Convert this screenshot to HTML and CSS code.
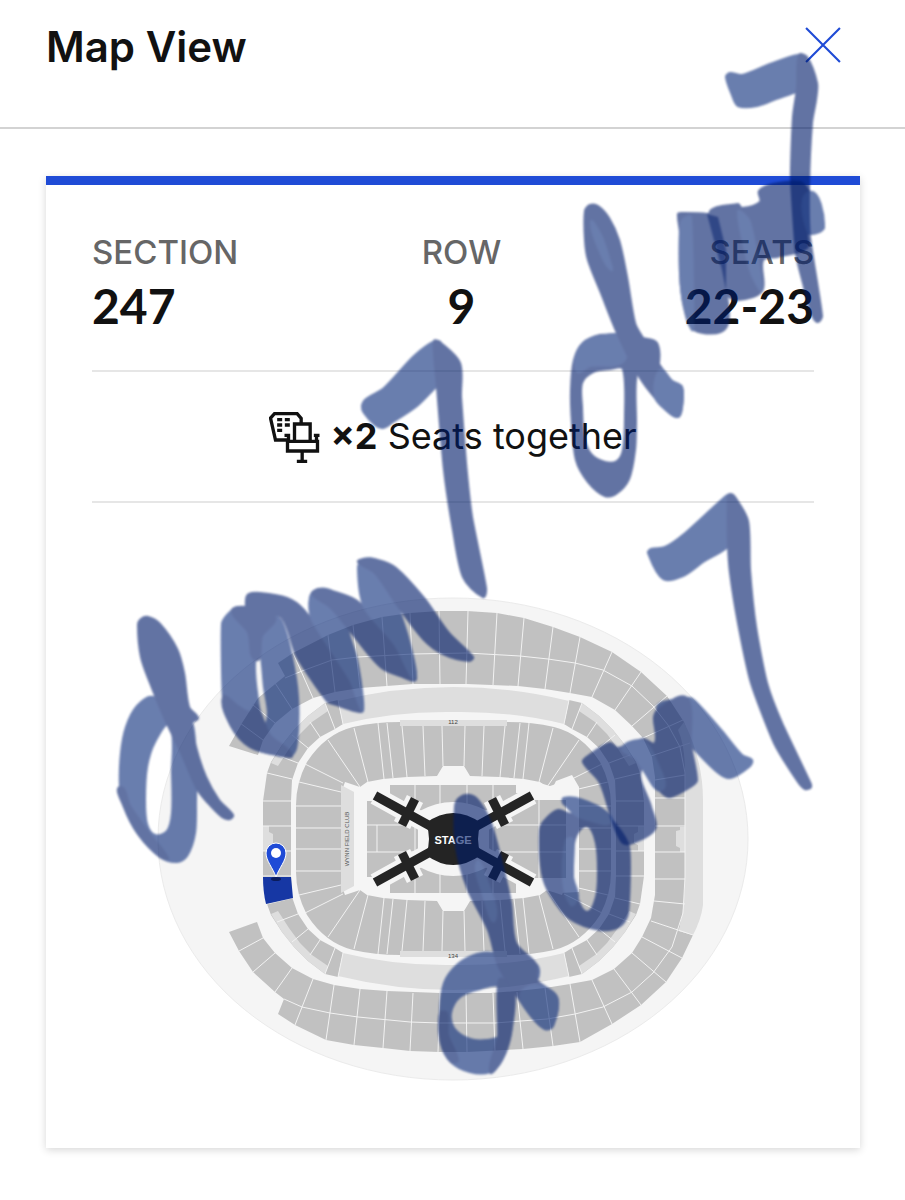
FILE: index.html
```html
<!DOCTYPE html>
<html lang="en">
<head>
<meta charset="utf-8">
<meta name="viewport" content="width=device-width, initial-scale=1">
<title>Map View</title>
<link rel="stylesheet" href="styles.css">
</head>
<body>
<div class="page">
  <header class="header">
    <h1 class="title">Map View</h1>
    <button class="close" type="button" aria-label="Close">
      <svg viewBox="0 0 34 34" aria-hidden="true"><path d="M1 1 33 33M33 1 1 33"/></svg>
    </button>
  </header>

  <main class="card">
    <dl class="stats">
      <div class="stat"><dt>SECTION</dt><dd>247</dd></div>
      <div class="stat stat-mid"><dt>ROW</dt><dd>9</dd></div>
      <div class="stat stat-end"><dt>SEATS</dt><dd>22-23</dd></div>
    </dl>

    <p class="together">
      <svg class="seat-icon" viewBox="60 240 152 156" aria-hidden="true">
        <path d="M116 327H79L64 261l12-13h68l12 14v12M136 330v-51h47v51M115 331h90v29h-90ZM106 313h17M118 313v18M194 313h17M202 313v18M159 360v30M143 391h31"/>
        <path class="dots" d="M84 261h15v10H84zM107 261h15v10h-15zM84 277h15v10H84zM107 277h15v10h-15zM84 293h15v10H84z"/>
      </svg>
      <span><strong>×2</strong> Seats together</span>
    </p>

    <svg class="map" viewBox="92 590 722 500" role="img" aria-label="Seating map">
      <defs>
        <g id="quarter">
          <path class="seats" d="M263 839V801L267 773 271 762 282 745 294 730 308 716 325 703 338 700 343 724 335 729 320 737 308 748 298 763 292 780 291 801V839Z"/>
          <path class="light" d="M271 763 282 745 294 730 308 716 325 703 328 711 312 722 300 734 289 749 278 766Z"/>
          <path class="light" d="M263 852V826H269V832L273 834V839H263Z"/>
          <path class="light" d="M338 701Q395 687 454 687V712Q395 711 343 724Z"/>
          <path class="seats" d="M296 839V805Q296 783 307 762 325 734 353 727 375 722 400 722H454V766H443L437 776 407 777 383 779 367 782 360 787 345 782 341 793V839Z"/>
          <path class="light" d="M400 720H454V726H400Z"/>
          <path class="line" d="M263 801H291M263 826H291M267 773 292 779M277 755 298 763M292 735 308 748M310 722 320 737M325 703 335 729M338 700 343 724M442 726 443 766M423 726 425 776M402 726 407 777M387 723 393 778M378 723 384 779M354 728 368 782M328 740 360 787M305 764 343 783M299 782 341 792M296 806H341M296 828H341"/>
        </g>
        <g id="half">
          <use href="#quarter"/>
          <use href="#quarter" transform="translate(0 1677) scale(1 -1)"/>
        </g>
        <g id="arm">
          <path d="M375 795.500 432 827"/>
          <path class="bar" d="M415 799 402 825"/>
        </g>
        <g id="arms">
          <use href="#arm"/>
          <use href="#arm" transform="translate(907 0) scale(-1 1)"/>
          <use href="#arm" transform="translate(0 1678) scale(1 -1)"/>
          <use href="#arm" transform="translate(907 1678) scale(-1 -1)"/>
        </g>
      </defs>

      <ellipse class="ground" cx="453" cy="839" rx="295" ry="241"/>

      <path class="seats" d="M229 746 242 723 258 698 285 676 278 663 293 653 328 635 353 625 382 617 410 613 439 611H467L497 613 524 618 553 627 580 637 612 652 641 672 667 696 684 722 691 743 686 775V877L683 913 679 931 693 935 682 958 666 982 641 1005 612 1024 580 1042 553 1046 523 1049 467 1052H439L410 1051 383 1048 354 1045 326 1040 295 1025 278 1014 284 999 275 992 253 972 239 951 229 932 257 922 263 938 275 953 292 968 313 979 334 985 360 989 387 991 440 993H490L517 991 545 988 570 984 592 980 614 969 632 953 642 937 651 918 655 895V777L652 757 643 738 632 726 615 710 592 697 570 693 545 689 518 686 467 684H413L360 688 335 692 313 698 292 709 275 723 263 740 258 755Z"/>
      <path class="light" d="M684 722Q703 760 703 800V905Q701 920 693 935L679 931Q685 905 685 877V773Q685 745 678 730Z"/>
      <path class="light" d="M686 827H680V830L676 831V846L680 848V852H686Z"/>
      <path class="line" d="M285 678 302 671 332 660 358 657 413 654 467 653 520 656 548 659 575 663 603 670 632 686 653 706 668 725 680 747 685 773V877L683 913 672 947 653 973 632 992 603 1007 575 1014 547 1019 495 1023H440L410 1022 358 1017 330 1013 302 1007 284 999"/>
      <path class="line" d="M240 723 263 740M253 705 275 723M275 683 292 709M293 653 313 698M328 635 335 692M353 625 360 688M382 617 387 686M410 613 413 684M439 611 440 684M468 611 466 684M497 613 493 685M524 618 518 686M553 627 545 689M580 637 570 693M612 652 592 697M641 672 615 710M667 696 632 726M683 720 643 738M690 743 651 756M685 775 655 780M655 798H685M655 826H685M655 852H685M655 879H685M685 904 654 901M651 921 693 935M642 937 682 958M632 953 666 982M614 969 641 1005M592 980 612 1024M570 984 580 1042M545 988 553 1046M517 992 523 1049M493 993 495 1051M466 993 467 1052M440 993 438 1052M413 993 410 1051M387 991 383 1048M360 989 354 1045M334 985 326 1040M313 979 295 1025M292 968 275 992M275 953 253 972M263 938 239 951"/>

      <use href="#half"/>
      <use href="#half" transform="translate(907 0) scale(-1 1)"/>

      <path class="light" d="M341 785 354 792V886L341 893Z"/>
      <path class="ground-fill" d="M540 783 553 787 556 781 572 775 579 787V892L560 893 545 890Z"/>
      <path class="seats" d="M390 785H516V793H526V800H566V878H516V893H390V877H367V801H390Z"/>
      <path class="line" d="M440 785V893M467 785V893M493 785V893M415 785V893M367 825H566M367 852H566M377 825V852M539 800V878"/>
      <g class="halo"><use href="#arms"/><path class="core" d="M420 813Q453 795 487 813V865Q453 883 420 865Z"/></g>
      <g class="stage"><use href="#arms"/><path class="core" d="M426 823Q453 803 481 823 475 839 481 855 453 875 426 855 432 839 426 823Z"/></g>
      <text class="stage-text" x="453" y="844">STAGE</text>
      <text class="tiny" x="453" y="724">112</text>
      <text class="tiny" x="453" y="958">134</text>
      <text class="club" transform="translate(349 839) rotate(-90)">WYNN FIELD CLUB</text>

      <path class="selected" d="M263 877H291L293 898 266 904Q263 892 263 877Z"/>
      <ellipse class="pin-shadow" cx="276" cy="879" rx="5" ry="2"/>
      <path class="pin" d="M276 877C273 868 266 861 266 853A10 10 0 0 1 286 853C286 861 279 868 276 877Z"/>
      <circle class="pin-dot" cx="276" cy="853" r="5"/>
    </svg>
  </main>

  <svg class="marker" viewBox="0 0 905 1200" aria-hidden="true">
    <g class="ink">
      <path class="soft" d="M726 77 730 73 742 75 770 64 798 55 806 58 805 88 796 92 776 99 757 106 738 106 732 95Z"/>
      <path d="M799 55 807 57 817 83 816 100 812 123 809 187 810 237 822 316 817 322 811 312 803 283 796 253 791 177 793 117 797 88Z"/>
    </g>
    <g class="ink">
      <path d="M678 214 682 213 707 214 717 218 725 283 726 328 694 330 684 307 680 273V233Z"/>
      <path class="soft" d="M681 222 691 217 693 329 684 307 680 273Z"/>
      <path d="M709 214 738 204 742 208 760 202 759 191 773 184 800 182 808 190 824 227 808 232 807 248 777 257 763 260 762 291 737 300 727 294Z"/>
      <path class="soft" d="M809 192 824 227 808 232ZM738 212 750 222 762 290 750 270Z"/>
    </g>
    <path class="overlap" d="M707 214 718 217 726 250V290L722 270Z"/>
    <g class="ink">
      <path fill-rule="evenodd" d="M617 335 600 335 583 343 574 360 571 390 572 423 576 460 588 482 605 496 616 494 629 479 635 450 636 423 637 373 650 371 658 368 657 343 642 338 617 333ZM623 369 610 369 593 372 582 383 582 407 584 437 591 454 605 462 617 461 623 450 625 417Z"/>
      <path class="soft" d="M600 336 583 343 575 360 578 372 590 366 623 362V337Z"/>
      <path d="M585 211 590 205 598 206 609 218 619 240 627 277 635 323 643 338 659 364 672 381 682 387 682 407 678 417 667 411 650 392 637 373 617 333 601 293 588 260 585 240Z"/>
      <path class="soft" d="M591 222 601 235 609 258 611 270 600 252ZM660 370 672 381 682 387 682 407 678 417 667 411 655 397Z"/>
    </g>
    <g class="ink">
      <path class="soft" d="M362 406 366 399 384 388 414 356 435 341 441 343 448 375 436 387 417 406 393 422 383 428 375 425 364 413Z"/>
      <path d="M434 341 441 343 460 363 461 397 466 463 472 517 486 588 483 597 463 577 453 530 444 470 437 387Z"/>
    </g>
    <g class="ink">
      <path class="soft" d="M648 553 651 549 665 547 684 534 726 496 731 495 732 541 703 562 683 576 663 579Z"/>
      <path d="M728 496 731 494 735 497 748 521 750 570 756 627 767 683 782 723 809 780 811 787 805 789 798 782 774 743 751 683 738 623 730 573 728 543Z"/>
    </g>
    <g class="ink">
      <path class="soft" fill-rule="evenodd" d="M153 697 137 706 126 727 121 753 120 787 124 807 138 834 160 857 177 862 187 856 195 833 196 800V787L192 723ZM170 725 155 742 147 767 145 800 147 824 155 835 167 831 172 813V773Z"/>
      <path d="M120 787 124 807 138 834 160 857 168 858 150 834 130 806Z"/>
      <path d="M138 625 141 619 148 617 160 624 177 649 184 673 189 707 198 718 192 723 196 747 206 777 219 800 233 815 230 819 222 817 207 802 197 789 182 755 164 717 150 683 141 657Z"/>
    </g>
    <g class="ink">
      <path class="soft" fill-rule="evenodd" d="M222 624 228 614 238 607 270 613 282 622 292 657 298 697 297 743 292 755 277 755 250 747 231 726 223 697ZM257 652 258 700 266 724 264 687Z"/>
      <path d="M223 697 231 726 250 747 277 755 292 755 270 735 256 705 250 712 238 706Z"/>
      <path d="M232 611 247 607 275 617 262 636 256 660 248 632Z"/>
      <path d="M246 600 249 594 260 593 287 598 303 609 330 645 350 670 362 711 355 711 337 705 327 701 297 657 282 618 262 613 248 612Z"/>
      <path class="soft" d="M310 597 318 589 332 591 346 610 348 630 357 660 363 700 362 711 350 680 312 620Z"/>
      <path d="M312 594 319 589 332 591 352 598 362 605 385 630 404 655 416 679 400 676 383 669 370 656 347 627 330 607Z"/>
      <path class="soft" d="M358 568 363 559 378 561 392 585 398 606 408 637 416 672 413 679 395 645 364 607Z"/>
      <path d="M358 562 364 559 378 560 396 568 424 598 449 633 473 657 469 661 443 654 423 639 397 605 375 573Z"/>
    </g>
    <g class="ink">
      <path class="soft" d="M657 709 687 698 695 701 722 731 742 755 752 760 749 767 730 778 717 772 692 747Z"/>
      <path d="M583 762 588 756 610 743 618 748 643 739 655 743 654 717 659 709 687 698 691 745 697 780 692 786 670 797 661 792 642 768 651 807 655 829 630 844 622 842 613 823 600 783Z"/>
      <path class="soft" d="M622 748 643 741 656 760 662 790 642 768 635 758Z"/>
    </g>
    <g class="ink">
      <path fill-rule="evenodd" d="M540 831 544 821 558 810 573 813 563 803 564 798 573 801 597 806 613 821 629 847 628 913 619 927 600 930 570 919 551 896 542 873ZM575 839 587 826 596 843 598 873 596 897 587 912 577 897 573 877Z"/>
      <path class="soft" d="M564 798 597 806 611 822 588 820 573 813ZM566 840 573 839 573 877 578 897 571 905 563 880Z"/>
    </g>
    <g class="ink">
      <path class="soft" fill-rule="evenodd" d="M493 953 477 954 458 964 444 983 440 1013 441 1043 451 1062 470 1072 490 1072 502 1060 511 1033 514 993 537 980 536 964ZM500 987 480 989 460 997 451 1013 454 1028 470 1039 487 1040 499 1036 502 1013Z"/>
      <path d="M499 980 514 990 511 1033 502 1060 490 1072 498 1037ZM440 1013 441 1043 451 1062 458 1060 448 1035 447 1013Z"/>
      <path d="M455 807 459 798 470 795 479 801 491 823 502 863 511 903 516 943 536 964 537 980 557 997 553 1026 545 1029 531 1016 515 993 498 965 488 930 468 890 456 847Z"/>
      <path class="soft" d="M477 862 487 880 495 920 482 892ZM535 985 557 997 553 1026 545 1029 531 1016 520 995Z"/>
    </g>
  </svg>
</div>
<script src="marker.js"></script>
</body>
</html>
```
FILE: styles.css
```css
* { box-sizing: border-box; }

body {
  margin: 0;
  background: #fff;
  color: #111;
  font-family: Inter, "Liberation Sans", sans-serif;
}

.page {
  position: relative;
  padding-bottom: 52px;
}

.header {
  display: flex;
  justify-content: space-between;
  align-items: flex-start;
  padding: 19px 64px 52px 46px;
  border-bottom: 2px solid #d3d3d3;
}

.title {
  margin: 0;
  font-size: 42px;
  line-height: 56px;
  font-weight: 600;
}

.close {
  margin-top: 8px;
  padding: 0;
  border: 0;
  background: none;
  line-height: 0;
}

.close svg {
  width: 36px;
  height: 36px;
  fill: none;
  stroke: #1f4bd6;
  stroke-width: 2;
}

.card {
  margin: 47px 45px 0 46px;
  padding: 47px 46px 58px;
  border-top: 9px solid #1f4bd6;
  background: #fff;
  box-shadow: 0 2px 8px rgba(0, 0, 0, 0.16);
}

.stats {
  display: flex;
  justify-content: space-between;
  margin: 0;
  padding-bottom: 36px;
  border-bottom: 2px solid #e6e6e6;
}

.stat dt {
  color: #666;
  font-size: 33px;
  line-height: 40px;
  font-weight: 500;
}

.stat dd {
  margin: 6px 0 0;
  font-size: 48px;
  line-height: 56px;
  font-family: Lato, Inter, sans-serif;
  font-weight: 700;
}

.stat-mid { text-align: center; }
.stat-end { text-align: right; }

.together {
  display: flex;
  align-items: center;
  justify-content: center;
  gap: 10px;
  margin: 0;
  padding: 38px 0;
  border-bottom: 2px solid #e6e6e6;
  font-size: 36px;
  line-height: 53px;
}

.together strong { font-weight: 700; }

.seat-icon {
  width: 51px;
  height: 52px;
  fill: none;
  stroke: #111;
  stroke-width: 10;
}

.seat-icon .dots { fill: #111; stroke: none; }

.map {
  display: block;
  width: 100%;
  margin-top: 87px;
}

.ground { fill: #f5f5f5; stroke: #ebebeb; }
.ground-fill { fill: #f5f5f5; }
.seats { fill: #c1c1c1; }
.light { fill: #dedede; }
.line { fill: none; stroke: #f2f2f2; stroke-width: 1; }

.halo { fill: #f5f5f5; stroke: #f5f5f5; stroke-width: 18; }
.halo .bar { stroke-width: 20; stroke-linecap: square; }
.halo .core { stroke-width: 4; }
.stage { fill: #242424; stroke: #242424; stroke-width: 9; }
.stage .core { stroke: none; }

.stage-text,
.tiny,
.club {
  font-family: "Liberation Sans", Arial, sans-serif;
  text-anchor: middle;
}

.stage-text { fill: #fff; font-size: 11px; font-weight: 700; }
.tiny { fill: #444; font-size: 6px; }
.club { fill: #555; font-size: 6px; }

.selected { fill: #1637a4; }
.pin-shadow { fill: #0b1c5c; }
.pin { fill: #1f4bd6; stroke: #fff; stroke-width: 1; }
.pin-dot { fill: #fff; }

.marker {
  position: absolute;
  top: 0;
  left: 0;
  width: 100%;
  pointer-events: none;
}

.ink {
  fill: #001c6a;
  stroke: #001c6a;
  stroke-width: 2;
  stroke-linejoin: round;
  opacity: 0.61;
  filter: blur(1px);
}

.ink .soft { fill: #0c2d7c; stroke: #0c2d7c; }
.overlap { fill: #001c6a; opacity: 0.5; filter: blur(1px); }
```
FILE: marker.js
```js
// Turns the straight-edged outlines of the marker strokes into smooth curves.
function readLoops(d) {
  return d.split("Z").filter(function (s) { return s.trim(); }).map(function (s) {
    var points = [];
    s.replace(/V\s*(\d+)/g, function (all, y) { return " v" + y + " "; })
      .replace(/[ML]/g, " ").trim().split(/\s+/)
      .reduce(function (pendingX, token) {
        if (token[0] === "v") {
          points.push([points[points.length - 1][0], Number(token.slice(1))]);
          return null;
        }
        if (pendingX === null) return Number(token);
        points.push([pendingX, Number(token)]);
        return null;
      }, null);
    return points;
  });
}

function smoothLoop(points) {
  var n = points.length;
  var at = function (i) { return points[(i + n) % n]; };
  var tangent = function (i) {
    var dx = at(i + 1)[0] - at(i - 1)[0];
    var dy = at(i + 1)[1] - at(i - 1)[1];
    var length = Math.hypot(dx, dy) || 1;
    return [dx / length, dy / length];
  };
  var out = "M" + points[0].join(" ");
  for (var i = 0; i < n; i++) {
    var a = at(i), b = at(i + 1), ta = tangent(i), tb = tangent(i + 1);
    var reach = Math.min(Math.hypot(b[0] - a[0], b[1] - a[1]) * 0.3, 12);
    out += "C" + [
      a[0] + ta[0] * reach, a[1] + ta[1] * reach,
      b[0] - tb[0] * reach, b[1] - tb[1] * reach,
      b[0], b[1]
    ].join(" ");
  }
  return out + "Z";
}

document.querySelectorAll(".ink path").forEach(function (path) {
  path.setAttribute("d", readLoops(path.getAttribute("d")).map(smoothLoop).join(""));
});
```
